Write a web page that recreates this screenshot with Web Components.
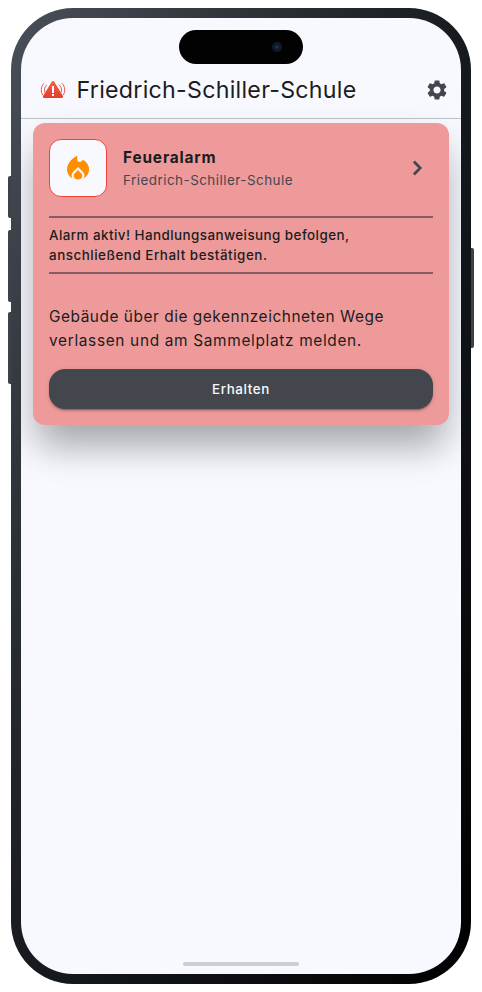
<!DOCTYPE html>
<html lang="de">
<head>
<meta charset="utf-8">
<title>Feueralarm</title>
<style>
html,body{margin:0;background:#fff}
body{font-family:Inter,Roboto,"Liberation Sans",sans-serif;color:#1b1d20;width:482px;height:992px;overflow:hidden}
</style>
</head>
<body>
<phone-frame>
  <app-header>
    <alarm-icon slot="logo"></alarm-icon>
    <text-line width="280">Friedrich-Schiller-Schule</text-line>
    <gear-icon slot="action"></gear-icon>
  </app-header>
  <alarm-card>
    <alarm-heading slot="heading">
      <flame-icon slot="icon"></flame-icon>
      <text-line slot="title" width="93.500">Feueralarm</text-line>
      <text-line slot="place" width="170">Friedrich-Schiller-Schule</text-line>
    </alarm-heading>
    <alarm-notice slot="notice">
      <text-line width="300.5">Alarm aktiv! Handlungsanweisung befolgen,</text-line>
      <text-line width="218.5">anschließend Erhalt bestätigen.</text-line>
    </alarm-notice>
    <text-line width="335">Gebäude über die gekennzeichneten Wege</text-line>
    <text-line width="313">verlassen und am Sammelplatz melden.</text-line>
    <confirm-button slot="action"><text-line width="58">Erhalten</text-line></confirm-button>
  </alarm-card>
</phone-frame>
<script>
function define(name, html) {
  customElements.define(name, class extends HTMLElement {
    constructor() {
      super();
      this.attachShadow({mode: 'open'}).innerHTML = html;
    }
  });
}

define('phone-frame', `<style>
:host{display:block;box-sizing:border-box;position:relative;width:482px;height:992px;padding:8px 11px}
.bezel{position:relative;box-sizing:border-box;width:460px;height:976px;padding:10px;border-radius:62px;background:linear-gradient(to bottom right,#4a5059 0%,#2f343a 25%,#171b1f 50%,#0c0e11 75%,#000 100%)}
.screen{box-sizing:border-box;position:relative;width:440px;height:956px;border-radius:52px;background:#f8f9ff;overflow:hidden;padding-top:44px}
.key{position:absolute;width:3px;background:#3b4249}
.l{left:8px;border-radius:2px 0 0 2px}
.r{left:471px;border-radius:0 2px 2px 0}
.island{position:absolute;left:158px;top:12px;width:124px;height:34px;border-radius:17px;background:#020202}
.lens{position:absolute;left:93px;top:12px;width:10px;height:10px;border-radius:50%;background:radial-gradient(circle,#17385a 0 1.2px,#0d1a29 2px 3px,#131a24 3.5px)}
.home{position:absolute;left:162px;bottom:8px;width:116px;height:4px;border-radius:2px;background:#cacfd3}
</style>
<div class="key l" style="top:176px;height:42px"></div>
<div class="key l" style="top:230px;height:72px"></div>
<div class="key l" style="top:312px;height:72px"></div>
<div class="key r" style="top:248px;height:100px"></div>
<div class="bezel"><div class="screen"><slot></slot>
<div class="island"><div class="lens"></div></div><div class="home"></div></div></div>`);

define('app-header', `<style>
:host{display:flex;align-items:center;box-sizing:border-box;height:57px;padding:0 12px 0 19px;border-bottom:1px solid #bdc2c9;font-size:23.200px;line-height:32px}
.name{margin-left:10.500px;flex:1}
</style><slot name="logo"></slot><div class="name"><slot></slot></div><slot name="action"></slot>`);

define('alarm-icon', `<style>:host{display:block;width:26px;height:20px}svg{display:block}</style>
<svg width="26" height="20" viewBox="0 0 26 20"><defs><linearGradient id="g" x1="0" y1="0" x2="0" y2="1"><stop stop-color="#fa5a43"/><stop offset="1" stop-color="#e33e31"/></linearGradient></defs>
<path d="M13 1c.6 0 1 .3 1.400 1l8.400 13.800c.7 1.300.2 2.200-1.200 2.200H4.400c-1.400 0-1.900-.9-1.200-2.200L11.600 2c.4-.7.8-1 1.400-1z" fill="url(#g)"/>
<path d="M12 6h2v7h-2zM12 14h2v2h-2z" fill="#fff"/>
<g fill="none" stroke="#ef5446" stroke-width="1"><path d="M4 3.300C.7 6.500.6 12 2.800 15.200M6.900 4.800c-2.200 1.700-3.100 5-2 7.900M22 3.300c3.300 3.200 3.400 8.700 1.200 11.900M19.100 4.800c2.200 1.700 3.100 5 2 7.900"/></g></svg>`);

define('gear-icon', `<style>:host{display:block;width:24px;height:24px}svg{display:block}</style>
<svg width="24" height="24" viewBox="0 0 24 24"><path fill="#43474d" d="M19.140 12.940c.040-.300.060-.610.060-.940 0-.320-.020-.640-.070-.940l2.030-1.580c.180-.140.230-.410.120-.610l-1.920-3.320c-.120-.220-.370-.290-.590-.220l-2.390.960c-.500-.380-1.030-.700-1.620-.940l-.360-2.540c-.040-.240-.240-.410-.480-.410h-3.840c-.240 0-.430.170-.470.410l-.360 2.540c-.590.240-1.130.570-1.620.940l-2.390-.960c-.220-.080-.470 0-.590.220L2.740 8.870c-.120.210-.080.470.120.610l2.030 1.580c-.050.300-.090.630-.090.940s.020.640.070.940l-2.030 1.580c-.180.140-.230.410-.120.610l1.920 3.320c.120.220.370.290.590.220l2.390-.960c.500.380 1.030.700 1.620.940l.360 2.540c.050.240.240.410.480.410h3.840c.240 0 .440-.170.470-.410l.360-2.540c.590-.240 1.130-.560 1.620-.940l2.390.960c.220.080.470 0 .590-.220l1.920-3.320c.120-.220.070-.470-.120-.610l-2.010-1.580zM12 15.600c-1.980 0-3.600-1.620-3.600-3.600s1.620-3.600 3.600-3.600 3.600 1.620 3.600 3.600-1.620 3.600-3.600 3.600z"/></svg>`);

define('alarm-card', `<style>
:host{display:flex;flex-direction:column;box-sizing:border-box;margin:4px 12px 0;height:302px;padding:16px;border-radius:12px;background:#ef9a9a;box-shadow:0 28px 36px -6px rgba(0,0,0,.26),0 14px 40px 0 rgba(0,0,0,.11)}
.body{margin:31px 0 16px;font-size:15.400px;line-height:24px}
</style><slot name="heading"></slot><slot name="notice"></slot><div class="body"><slot></slot></div><slot name="action"></slot>`);

define('alarm-heading', `<style>
:host{display:flex;align-items:center;height:58px}
.tile{display:flex;align-items:center;justify-content:center;box-sizing:border-box;width:58px;height:58px;border:1px solid #f44336;border-radius:12px;background:#f8f9ff}
.text{flex:1;margin-left:16px}
.title{font-size:15.400px;font-weight:700;line-height:24px}
.place{font-size:13.400px;line-height:20px;color:#43474e}
svg{display:block;margin-right:4px}
</style><div class="tile"><slot name="icon"></slot></div>
<div class="text"><div class="title"><slot name="title"></slot></div><div class="place"><slot name="place"></slot></div></div>
<svg width="24" height="24" viewBox="0 0 24 24"><path d="M8.900 5.500l6.300 6.500-6.300 6.500" fill="none" stroke="#43474e" stroke-width="2.700"/></svg>`);

define('flame-icon', `<style>:host{display:block;width:24px;height:26px}svg{display:block}</style>
<svg width="24" height="26" viewBox="0 0 24 26"><path fill="#ff8f00" d="M11.200.500v3.900c0 1.500 1.200 2.500 2.600 2.500.9 0 1.600-.4 2.100-1l1-1.200c3.700 2.100 6.200 5.600 6.200 9.600 0 3.900-2 7.200-5.300 9.100.4-.8.6-1.600.6-2.500 0-1.700-.6-3.200-1.900-4.400L12 12l-4.500 4.500c-1.300 1.200-1.900 2.700-1.900 4.400 0 .9.200 1.700.6 2.500C2.900 21.500 1 18.200 1 14.300 1 8 6.300 3.300 11.200.500z"/><path fill="#ff8f00" d="M12 15l3 3c.9.9 1.300 1.800 1.300 2.800 0 2.100-1.800 3.700-4.300 3.700s-4.300-1.600-4.300-3.700c0-1 .4-1.900 1.300-2.800z"/></svg>`);

define('alarm-notice', `<style>
:host{display:block;box-sizing:border-box;height:58px;margin-top:19px;padding:7px 0;border-top:2px solid #865c60;border-bottom:2px solid #865c60;font-size:13.400px;font-weight:500;line-height:20px}
</style><slot></slot>`);

define('confirm-button', `<style>
:host{display:flex;align-items:center;justify-content:center;height:40px;border-radius:16px;background:#43474d;color:#f8f9ff;font-size:13.400px;font-weight:500;line-height:20px;box-shadow:0 3px 1px -2px rgba(0,0,0,.2),0 2px 2px rgba(0,0,0,.14),0 1px 5px rgba(0,0,0,.12)}
</style><slot></slot>`);

/* One line of text, tracked so that it spans the given width. */
customElements.define('text-line', class extends HTMLElement {
  constructor() {
    super();
    this.attachShadow({mode: 'open'}).innerHTML =
      '<style>:host{display:block;white-space:nowrap}span{display:inline-block}</style><span><slot></slot></span>';
  }
  connectedCallback() {
    const span = this.shadowRoot.querySelector('span');
    const natural = span.getBoundingClientRect().width;
    const gap = (Number(this.getAttribute('width')) - natural) / this.textContent.length;
    span.style.letterSpacing = gap.toFixed(3) + 'px';
  }
});
</script>
</body>
</html>
